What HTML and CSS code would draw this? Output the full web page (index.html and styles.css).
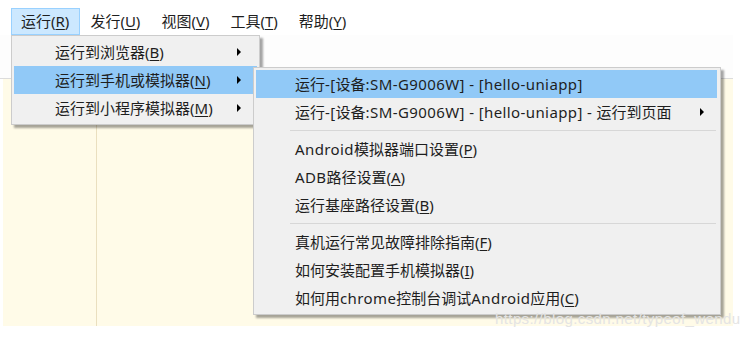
FILE: index.html
```html
<!DOCTYPE html>
<html lang="zh-CN">
<head>
  <meta charset="UTF-8" />
  <title>HBuilderX 运行菜单</title>
  <link rel="stylesheet" href="styles.css">
</head>
<body>
  <div class="window">
    <div class="menubar">
      <span class="top-item active">运行(<u>R</u>)</span>
      <span class="top-item">发行(<u>U</u>)</span>
      <span class="top-item">视图(<u>V</u>)</span>
      <span class="top-item">工具(<u>T</u>)</span>
      <span class="top-item">帮助(<u>Y</u>)</span>
    </div>
    <div class="toolbar"></div>
    <div class="editor">
      <div class="gutter"></div>
      <div class="code"></div>
    </div>

    <!-- 运行 dropdown -->
    <div class="menu main-menu">
      <div class="item">运行到浏览器(<u>B</u>)<span class="arrow"></span></div>
      <div class="item hover">运行到手机或模拟器(<u>N</u>)<span class="arrow"></span></div>
      <div class="item">运行到小程序模拟器(<u>M</u>)<span class="arrow"></span></div>
    </div>

    <!-- 手机或模拟器 submenu -->
    <div class="menu sub-menu">
      <div class="item hover">运行<span class="lat">-[</span>设备<span class="lat">:SM-G9006W] - [hello-uniapp]</span></div>
      <div class="item">运行<span class="lat">-[</span>设备<span class="lat">:SM-G9006W] - [hello-uniapp] - </span>运行到页面<span class="arrow"></span></div>
      <div class="sep"></div>
      <div class="item"><span class="lat">Android</span>模拟器端口设置(<u>P</u>)</div>
      <div class="item"><span class="lat">ADB</span>路径设置(<u>A</u>)</div>
      <div class="item">运行基座路径设置(<u>B</u>)</div>
      <div class="sep"></div>
      <div class="item">真机运行常见故障排除指南(<u>F</u>)</div>
      <div class="item">如何安装配置手机模拟器(<u>I</u>)</div>
      <div class="item">如何用<span class="lat">chrome</span>控制台调试<span class="lat">Android</span>应用(<u>C</u>)</div>
    </div>

    <div class="watermark">https://blog.csdn.net/typeof_wendu</div>
  </div>
</body>
</html>
```

FILE: styles.css
```css
body { margin: 0; background: #fff; font-family: "Noto Sans", "Noto Sans CJK SC", sans-serif; font-size: 15px; color: #1e1e1e; }
u { text-decoration-thickness: 1px; text-underline-offset: 2px; }
.lat { letter-spacing: 0.4px; }

.window { position: relative; width: 747px; height: 338px; }

.menubar { display: flex; height: 35px; padding: 8px 0 0 11px; box-sizing: border-box; }
.top-item { height: 27px; line-height: 25px; padding: 0 10px 0 9px; box-sizing: border-box; border: 1px solid transparent; }
.top-item.active { background: #cce8ff; border-color: #99d1ff; }

.toolbar { height: 43px; width: 733px; background: #fdfdfd; border-bottom: 1px solid #dcdcdc; }

.editor { display: flex; height: 247px; width: 730px; margin-left: 3px; background: #fffbe8; }
.gutter { width: 93px; border-right: 1px solid #eadfbf; }
.code { flex: 1; }

.menu { position: absolute; background: #f0f0f0; border: 1px solid #cccccc; box-shadow: 3px 3px 2px rgba(0, 0, 0, 0.35); padding: 2px 0; box-sizing: border-box; }
.menu .item { position: relative; height: 28px; line-height: 28px; margin: 0 2px; white-space: nowrap; }
.menu .item.hover { background: #91c9f7; }
.arrow { position: absolute; top: 10px; width: 0; height: 0; border-top: 4px solid transparent; border-bottom: 4px solid transparent; border-left: 4px solid #000; }

.main-menu { left: 11px; top: 35px; width: 249px; height: 90px; }
.main-menu .item { padding-left: 41px; }
.main-menu .arrow { left: 223px; }

.sub-menu { left: 253px; top: 67px; width: 468px; height: 248px; }
.sub-menu .item { padding-left: 39px; margin-right: 3px; }
.sub-menu .arrow { left: 444px; }
.sep { height: 9px; margin-left: 36px; margin-right: 4px; position: relative; }
.sep::after { content: ""; position: absolute; left: 0; right: 0; top: 4px; border-top: 1px solid #d7d7d7; }

.watermark { position: absolute; left: 495px; top: 310px; font-family: "Liberation Sans", sans-serif; font-size: 15px; color: #e4e4e4; letter-spacing: 0.4px; }
```
